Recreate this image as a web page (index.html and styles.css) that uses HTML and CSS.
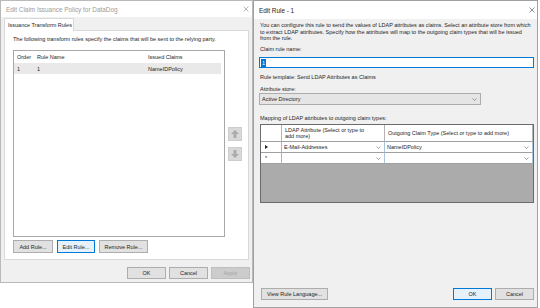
FILE: index.html
```html
<!DOCTYPE html>
<html lang="en">

    <head>
        <meta charset="UTF-8">
        <meta name="viewport" content="width=device-width, initial-scale=1.0">
        <title>Edit Claim Issuance Policy</title>
        <link rel="stylesheet" href="styles.css">
    </head>

    <body>
        <div class="desk">

            <!-- policy dialog (inactive) -->
            <div class="win win-main">
                <div class="titlebar titlebar-off">
                    <span>Edit Claim Issuance Policy for DataDog</span>
                    <svg class="close" width="6" height="6" viewBox="0 0 6 6"><path d="M0.5 0.5L5.5 5.5M5.5 0.5L0.5 5.5" stroke="#8a8a8a" stroke-width="0.6"/></svg>
                </div>
                <div class="win-body">
                    <div class="tab">Issuance Transform Rules</div>
                    <div class="tab-panel">
                        <p class="intro">The following transform rules specify the claims that will be sent to the relying party.</p>
                        <div class="rules">
                            <div class="rules-list">
                                <div class="rules-head">
                                    <span class="c-order">Order</span>
                                    <span class="c-name">Rule Name</span>
                                    <span>Issued Claims</span>
                                </div>
                                <div class="rules-row">
                                    <span class="c-order">1</span>
                                    <span class="c-name">1</span>
                                    <span>NameIDPolicy</span>
                                </div>
                            </div>
                            <div class="move">
                                <button class="move-btn"><svg width="12" height="12" viewBox="0 0 12 12"><path d="M6 2L10 6H7.5V10H4.5V6H2Z" fill="#ababab"/></svg></button>
                                <button class="move-btn"><svg width="12" height="12" viewBox="0 0 12 12"><path d="M6 10L10 6H7.5V2H4.5V6H2Z" fill="#ababab"/></svg></button>
                            </div>
                        </div>
                        <div class="rule-btns">
                            <button class="btn w-add">Add Rule...</button>
                            <button class="btn btn-focus w-edit">Edit Rule...</button>
                            <button class="btn w-remove">Remove Rule...</button>
                        </div>
                    </div>
                    <div class="dlg-btns">
                        <button class="btn">OK</button>
                        <button class="btn">Cancel</button>
                        <button class="btn btn-off">Apply</button>
                    </div>
                </div>
            </div>

            <!-- edit rule dialog (active) -->
            <div class="win win-rule">
                <div class="titlebar">
                    <span>Edit Rule - 1</span>
                    <svg class="close" width="6" height="6" viewBox="0 0 6 6"><path d="M0.5 0.5L5.5 5.5M5.5 0.5L0.5 5.5" stroke="#444" stroke-width="0.6"/></svg>
                </div>
                <div class="rule-body">
                    <p class="desc">You can configure this rule to send the values of LDAP attributes as claims. Select an attribute store from which to extract LDAP attributes. Specify how the attributes will map to the outgoing claim types that will be issued from the rule.</p>
                    <div class="label l-name">Claim rule name:</div>
                    <div class="field"><span class="sel-text">1</span></div>
                    <div class="label l-template">Rule template: Send LDAP Attributes as Claims</div>
                    <div class="label l-store">Attribute store:</div>
                    <div class="select">
                        <span>Active Directory</span>
                        <svg width="5" height="3" viewBox="0 0 5 3"><path d="M0.5 0.5L2.5 2.5L4.5 0.5" fill="none" stroke="#666" stroke-width="0.6"/></svg>
                    </div>
                    <div class="label l-map">Mapping of LDAP attributes to outgoing claim types:</div>
                    <div class="map">
                        <div class="map-h"></div>
                        <div class="map-h">LDAP Attribute (Select or type to<br>add more)</div>
                        <div class="map-h">Outgoing Claim Type (Select or type to add more)</div>

                        <div class="map-rh"><svg width="3" height="4" viewBox="0 0 3 4"><path d="M0 0L3 2L0 4Z" fill="#222"/></svg></div>
                        <div class="map-c">
                            <span>E-Mail-Addresses</span>
                            <svg width="5" height="3" viewBox="0 0 5 3"><path d="M0.5 0.5L2.5 2.5L4.5 0.5" fill="none" stroke="#666" stroke-width="0.6"/></svg>
                        </div>
                        <div class="map-c">
                            <span>NameIDPolicy</span>
                            <svg width="5" height="3" viewBox="0 0 5 3"><path d="M0.5 0.5L2.5 2.5L4.5 0.5" fill="none" stroke="#666" stroke-width="0.6"/></svg>
                        </div>

                        <div class="map-rh">*</div>
                        <div class="map-c">
                            <span></span>
                            <svg width="5" height="3" viewBox="0 0 5 3"><path d="M0.5 0.5L2.5 2.5L4.5 0.5" fill="none" stroke="#666" stroke-width="0.6"/></svg>
                        </div>
                        <div class="map-c">
                            <span></span>
                            <svg width="5" height="3" viewBox="0 0 5 3"><path d="M0.5 0.5L2.5 2.5L4.5 0.5" fill="none" stroke="#666" stroke-width="0.6"/></svg>
                        </div>
                    </div>
                    <div class="rule-foot">
                        <button class="btn w-lang">View Rule Language...</button>
                        <button class="btn btn-focus w-ok">OK</button>
                        <button class="btn">Cancel</button>
                    </div>
                </div>
            </div>

        </div>
    </body>

</html>
```

FILE: styles.css
```css
* {
    box-sizing: border-box;
}

body {
    margin: 0;
    background: #fff;
    font-family: "Liberation Sans", Arial, sans-serif;
    font-size: 5.5px;
    color: #1e1e1e;
}

.desk {
    display: flex;
    align-items: flex-start;
}

.win {
    display: flex;
    flex-direction: column;
    border: 1px solid #b9b9b9;
    background: #f0f0f0;
}

.win-main {
    width: 253px;
    height: 283px;
}

.win-rule {
    width: 285px;
    height: 308px;
    border-color: #a0a0a0;
}

.titlebar {
    display: flex;
    align-items: center;
    justify-content: space-between;
    height: 16px;
    padding: 0 3px 0 5px;
    background: #fff;
    font-size: 6.4px;
}

.titlebar-off {
    color: #9c9c9c;
}

.win-rule .titlebar {
    height: 18px;
    padding-right: 2px;
}

/* buttons */

.btn {
    height: 13px;
    padding: 0;
    border: 1px solid #adadad;
    background: #e1e1e1;
    font: inherit;
    color: inherit;
}

.btn-focus {
    border-color: #0078d7;
    background: #e5f1fb;
}

.btn-off {
    border-color: #bfbfbf;
    background: #cccccc;
    color: #a3a3a3;
}

/* policy dialog */

.win-body {
    flex: 1;
    display: flex;
    flex-direction: column;
    padding: 1px 3px 0;
}

.tab {
    position: relative;
    z-index: 1;
    align-self: flex-start;
    width: 70px;
    height: 13px;
    margin-bottom: -1px;
    padding-left: 3px;
    border: 1px solid #d9d9d9;
    border-bottom: 0;
    background: #fff;
    line-height: 12px;
}

.tab-panel {
    height: 230px;
    padding: 5px 0 0 8px;
    border: 1px solid #d9d9d9;
    background: #fff;
}

.intro {
    margin: 0 0 7px;
    line-height: 7px;
}

.rules {
    display: flex;
    gap: 3px;
}

.rules-list {
    width: 212px;
    height: 187px;
    border: 1px solid #a8a8a8;
    background: #fff;
}

.rules-head,
.rules-row {
    display: flex;
    align-items: center;
    padding-left: 3px;
}

.rules-head {
    height: 12px;
}

.rules-row {
    height: 11px;
    margin-right: 3px;
    background: #e9e9e9;
}

.c-order {
    width: 20px;
}

.c-name {
    width: 111px;
}

.move {
    display: flex;
    flex-direction: column;
    justify-content: center;
    gap: 6px;
}

.move-btn {
    display: flex;
    align-items: center;
    justify-content: center;
    width: 14px;
    height: 14px;
    padding: 0;
    border: 1px solid #cdcdcd;
    background: #d9d9d9;
}

.rule-btns {
    display: flex;
    gap: 4px;
    margin-top: 3px;
}

.w-add {
    width: 40px;
}

.w-edit {
    width: 38px;
}

.w-remove {
    width: 49px;
}

.dlg-btns {
    display: flex;
    justify-content: flex-end;
    gap: 3px;
    margin: 7px -1px 0 0;
}

.dlg-btns .btn {
    width: 39px;
    height: 12px;
}

/* edit rule dialog */

.rule-body {
    flex: 1;
    display: flex;
    flex-direction: column;
    padding: 0 3px 7px 5px;
}

.desc {
    margin: 3px 0 0 1px;
    line-height: 6.5px;
}

.label {
    line-height: 7px;
    padding-left: 1px;
}

.l-name {
    margin-top: 4px;
}

.field {
    display: flex;
    align-items: center;
    height: 11px;
    margin-top: 4.5px;
    padding-left: 1px;
    border: 1px solid #0078d7;
    background: #fff;
}

.sel-text {
    padding: 0 1px;
    background: #0078d7;
    color: #fff;
    line-height: 8px;
}

.l-template {
    margin-top: 5.5px;
}

.l-store {
    margin-top: 5px;
}

.select {
    display: flex;
    align-items: center;
    justify-content: space-between;
    width: 222px;
    height: 12px;
    margin-top: 0.5px;
    padding: 0 3px 0 2px;
    border: 1px solid #acacac;
    background: #e5e5e5;
}

.l-map {
    margin-top: 9.5px;
}

.map {
    display: grid;
    grid-template-columns: 21px 103px 1fr;
    grid-template-rows: 17px 11px 11px;
    align-content: start;
    height: 79px;
    margin: 2.5px 0 0 1px;
    border: 1px solid #6b6b6b;
    background: #ababab;
}

.map-h,
.map-rh,
.map-c {
    display: flex;
    align-items: center;
    background: #fff;
    border-right: 1px solid #b4b4b4;
    border-bottom: 1px solid #a0a0a0;
}

.map-h {
    padding-left: 3px;
    line-height: 6.5px;
}

.map-rh {
    padding-left: 4px;
}

.map-c {
    justify-content: space-between;
    padding: 0 3px 0 2px;
    border-right-color: #a9c3dc;
}

.rule-foot {
    display: flex;
    gap: 3px;
    margin-top: auto;
    padding-left: 2px;
}

.rule-foot .btn {
    width: 39px;
    height: 12px;
}

.rule-foot .w-lang {
    width: 67px;
}

.rule-foot .w-ok {
    margin-left: auto;
}
```
